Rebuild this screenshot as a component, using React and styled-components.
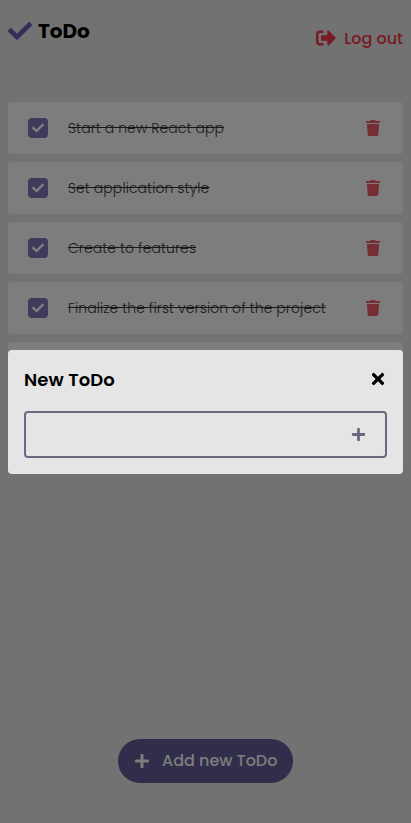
import React from 'react';
import styled, { createGlobalStyle } from 'styled-components';
import { FaCheck, FaPlus, FaSignOutAlt, FaTimes, FaTrash } from 'react-icons/fa';

const GlobalStyle = createGlobalStyle`
  * { box-sizing: border-box; }
  body {
    margin: 0;
    background: #e5e5e5;
    font-family: Poppins, Inter, sans-serif;
    overflow: hidden;
  }
  button { font: inherit; border: 0; background: none; padding: 0; }
  svg { display: block; flex: none; }
`;

const Page = styled.div`
  height: 100vh;
  padding: 0 8px 40px;
  display: flex;
  flex-direction: column;
`;

const Header = styled.header`
  height: 102px;
  flex: none;
  display: flex;
  justify-content: space-between;
  align-items: flex-start;
`;

const Logo = styled.h1`
  margin: 0;
  padding-top: 16px;
  display: flex;
  align-items: center;
  gap: 6px;
  color: #000;
  font-size: 20px;
  font-weight: 700;
  line-height: 30px;
  svg { color: #6c56b4; }
`;

const LogoutButton = styled.button`
  margin-top: 26px;
  height: 24px;
  display: flex;
  align-items: center;
  gap: 8px;
  color: #f03446;
  font-size: 16px;
  font-weight: 500;
  white-space: nowrap;
`;

const List = styled.ul`
  flex: 1;
  margin: 0;
  padding: 0;
  list-style: none;
  display: flex;
  flex-direction: column;
  gap: 8px;
`;

const Item = styled.li`
  height: 52px;
  flex: none;
  padding: 0 22px 0 20px;
  display: flex;
  align-items: center;
  border-radius: 4px;
  background: #fafafa;
`;

const Checkbox = styled.span`
  width: 20px;
  height: 20px;
  margin-right: 20px;
  border-radius: 4px;
  display: grid;
  place-items: center;
  background: #8376b7;
  color: #fafafa;
`;

const ItemText = styled.span`
  flex: 1;
  color: #000;
  opacity: 0.8;
  font-size: 14px;
  font-weight: 300;
  letter-spacing: 0.07px;
  line-height: 20px;
  text-decoration: line-through;
  white-space: nowrap;
`;

const DeleteButton = styled.button`
  color: #ee5b69;
`;

const AddButton = styled.button`
  align-self: center;
  width: 175px;
  height: 44px;
  flex: none;
  border-radius: 22px;
  display: flex;
  align-items: center;
  padding-left: 16px;
  gap: 12px;
  background: #605c96;
  color: #fafafa;
  font-size: 16px;
  font-weight: 500;
  line-height: 22px;
  white-space: nowrap;
`;

const Overlay = styled.div`
  position: fixed;
  inset: 0;
  padding: 0 8px;
  display: flex;
  align-items: center;
  background: rgba(0, 0, 0, 0.5);
`;

const Dialog = styled.section`
  width: 100%;
  height: 124px;
  padding: 16px;
  border-radius: 4px;
  background: #e5e5e5;
`;

const DialogHeader = styled.div`
  height: 27px;
  margin-bottom: 18px;
  display: flex;
  align-items: center;
  justify-content: space-between;
`;

const DialogTitle = styled.h2`
  margin: 0;
  padding-top: 1px;
  font-size: 18px;
  font-weight: 600;
  letter-spacing: 0.1px;
  line-height: 26px;
`;

const CloseButton = styled.button`
  color: #000;
  width: 18px;
  height: 18px;
`;

const Field = styled.form`
  height: 47px;
  padding-right: 19px;
  display: flex;
  align-items: center;
  border: 2px solid #6c6880;
  border-radius: 4px;
  color: #6c6880;
`;

const Input = styled.input`
  flex: 1;
  min-width: 0;
  height: 100%;
  border: 0;
  outline: 0;
  background: transparent;
  font: inherit;
`;

const todos = [
  'Start a new React app',
  'Set application style',
  'Create to features',
  'Finalize the first version of the project',
  '',
];

export default function App() {
  return (
    <>
      <GlobalStyle />
      <Page>
        <Header>
          <Logo><FaCheck size={24} />ToDo</Logo>
          <LogoutButton><FaSignOutAlt size={20} />Log out</LogoutButton>
        </Header>
        <List>
          {todos.map((text, index) => (
            <Item key={index}>
              <Checkbox><FaCheck size={12} /></Checkbox>
              <ItemText>{text}</ItemText>
              <DeleteButton aria-label="Delete"><FaTrash size={16} /></DeleteButton>
            </Item>
          ))}
        </List>
        <AddButton><FaPlus size={16} />Add new ToDo</AddButton>
      </Page>
      <Overlay>
        <Dialog role="dialog">
          <DialogHeader>
            <DialogTitle>New ToDo</DialogTitle>
            <CloseButton aria-label="Close"><FaTimes size={18} /></CloseButton>
          </DialogHeader>
          <Field>
            <Input aria-label="New ToDo" />
            <FaPlus size={15} />
          </Field>
        </Dialog>
      </Overlay>
    </>
  );
}
